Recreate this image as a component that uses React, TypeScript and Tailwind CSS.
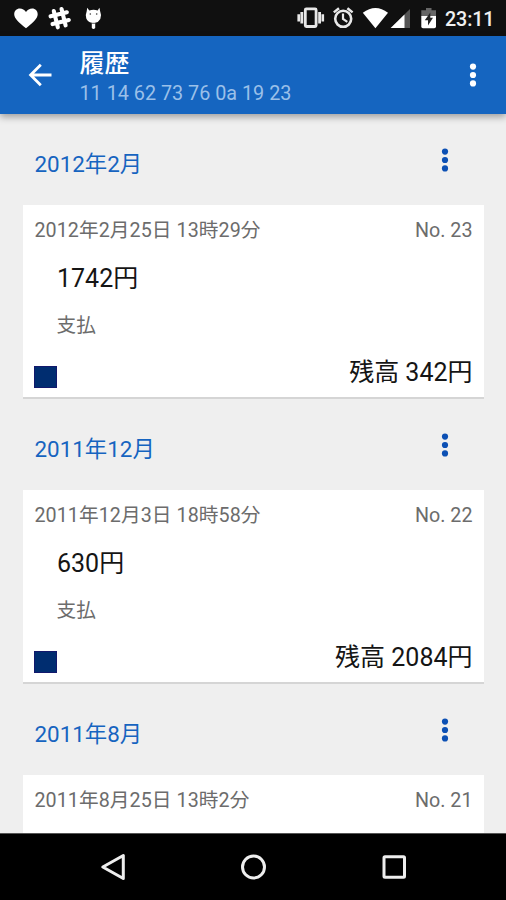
type Detail = { amount: string; kind: string; balance: string };
type Entry = { month: string; date: string; no: string; detail?: Detail };

const entries: Entry[] = [
  {
    month: '2012年2月',
    date: '2012年2月25日 13時29分',
    no: 'No. 23',
    detail: { amount: '1742円', kind: '支払', balance: '残高 342円' },
  },
  {
    month: '2011年12月',
    date: '2011年12月3日 18時58分',
    no: 'No. 22',
    detail: { amount: '630円', kind: '支払', balance: '残高 2084円' },
  },
  { month: '2011年8月', date: '2011年8月25日 13時2分', no: 'No. 21' },
];

function Dots({ className }: { className: string }) {
  return (
    <svg width="8" height="24" viewBox="0 0 8 24" className={className} fill="currentColor">
      <circle cx="4" cy="3.6" r="3.1" />
      <circle cx="4" cy="12" r="3.1" />
      <circle cx="4" cy="20.4" r="3.1" />
    </svg>
  );
}

function StatusBar() {
  return (
    <div className="flex h-9 shrink-0 items-start bg-[#101010] text-white">
      <svg width="110" height="36" viewBox="0 0 110 36" fill="#fff">
        <path d="M26 28.3C19 22.4 14.2 18.5 14.2 14.2C14.2 10.9 16.7 8.6 19.8 8.6C22.3 8.6 24.6 9.8 26 12C27.4 9.8 29.7 8.6 32.2 8.6C35.3 8.6 37.7 10.9 37.7 14.2C37.7 18.5 33 22.4 26 28.3Z" />
        <g stroke="#fff" strokeWidth="4.1" strokeLinecap="round" transform="rotate(-14 59.7 18.2)">
          <path d="M55.7 9.8V26.6M63.7 9.8V26.6M51.3 14.2H68.1M51.3 22.2H68.1" />
        </g>
        <path d="M87.2 7.8L89.3 10.5Q93.5 9.2 97.7 10.5L99.4 7.8L100.2 11.5Q101.9 15.2 100.3 19Q98.5 22.3 95.2 22.8V28Q93.5 30 91.8 28V22.8Q87.6 22 86.3 18.5Q85.2 14.5 86.7 11.2Z" />
        <circle cx="90.3" cy="14" r=".8" fill="#333" />
        <circle cx="96.7" cy="14" r=".8" fill="#333" />
        <path d="M91.3 23.3H95.7" stroke="#333" strokeWidth=".8" />
      </svg>
      <svg width="150" height="36" viewBox="0 0 150 36" fill="none" className="ml-[182px]">
        <g stroke="#e8e8e8">
          <rect x="13.3" y="8.9" width="10.8" height="17.6" rx="1" strokeWidth="2.8" />
          <path d="M9.8 12V23.5M27.6 12V23.5" strokeWidth="2.8" />
          <path d="M6.7 14.3V21.5M30.8 14.3V21.5" strokeWidth="2.6" />
          <circle cx="51.2" cy="18.8" r="8" strokeWidth="2.6" />
          <path d="M41.8 12.4L47 8.2M60.6 12.4L55.4 8.2" strokeWidth="2.5" />
          <path d="M51 13.5V19L55.3 21.9" strokeWidth="2.2" />
        </g>
        <path d="M70.8 12.8Q83.5 3.4 96 12.8L83.4 28.2Z" fill="#fff" />
        <path d="M118 9V28H98.7Z" fill="#555" />
        <path d="M112.5 14.5V28H98.7Z" fill="#fff" />
        <path d="M129.3 10.3H134V8H139.5V10.3H144V16.5H129.3Z" fill="#666" />
        <path d="M129.3 16H144V26.5Q144 28.2 142.2 28.2H131Q129.3 28.2 129.3 26.5Z" fill="#fff" />
        <path d="M138.3 12.5L132.8 20.2H136V25.5L141 17.7H138.3Z" fill="#222" />
      </svg>
      <span className="ml-[3px] mt-[7.5px] font-[Roboto] text-[19.7px] leading-[24px] font-medium tracking-[-0.1px] text-[#f0f0f0]">
        23:11
      </span>
    </div>
  );
}

function Section({ entry }: { entry: Entry }) {
  const { detail } = entry;
  return (
    <section className="h-[285px] shrink-0">
      <div className="flex h-[91px] items-start justify-between pl-[34.5px] pr-[57px] pt-[33px] text-[#1664c0]">
        <h2 className="pt-[2px] text-[22.4px] leading-[30px]">{entry.month}</h2>
        <Dots className="mt-[0.5px] text-[#0c50b4]" />
      </div>
      <article className="ml-[23px] flex h-[194px] w-[461px] flex-col border-b-2 border-[#d5d5d5] bg-white pl-[11px] pr-[11.5px] pt-[13px] text-[#6c6c6c]">
        <div className="flex justify-between text-[19.7px] leading-[26px]">
          <span className="ml-[0.5px] tracking-[0.06px]">{entry.date}</span>
          <span>{entry.no}</span>
        </div>
        {detail && (
          <>
            <p className="ml-[23px] mt-[18px] text-[25px] leading-[34px] text-[#151515]">{detail.amount}</p>
            <p className="ml-[22.5px] mt-[17px] text-[19.7px] leading-[26px]">{detail.kind}</p>
            <div className="mt-[17px] flex items-start justify-between">
              <span className="mt-[10px] h-[22px] w-[23px] border border-[#12186c] bg-[#002d70]" />
              <span className="text-[25px] leading-[34px] text-[#151515]">{detail.balance}</span>
            </div>
          </>
        )}
      </article>
    </section>
  );
}

export default function App() {
  return (
    <div className="flex h-[900px] w-[506px] flex-col overflow-hidden bg-[#efefef] font-[Roboto,'Noto_Sans_CJK_JP',sans-serif]">
      <StatusBar />
      <header className="z-10 flex h-[78px] shrink-0 items-start bg-[#1565c0] text-white shadow-[0_3px_7px_rgba(0,0,0,0.34)]">
        <svg width="24" height="24" viewBox="0 0 24 24" className="ml-[28px] mt-[27px]" fill="none" stroke="#fff" strokeWidth="2.8">
          <path d="M23.5 12H3M12.8 1.8L2.6 12L12.8 22.2" />
        </svg>
        <div className="ml-[27.5px] pt-[11px]">
          <h1 className="text-[25px] leading-[34px] font-medium">履歴</h1>
          <p className="text-[19.8px] leading-[26px] text-[#9bc0e9]">11 14 62 73 76 0a 19 23</p>
        </div>
        <Dots className="ml-auto mr-[29px] mt-[27px]" />
      </header>
      <main className="flex h-[719px] shrink-0 flex-col overflow-hidden">
        {entries.map((e) => (
          <Section key={e.no} entry={e} />
        ))}
      </main>
      <nav className="flex h-[67px] shrink-0 items-center justify-center border-t border-[#555] bg-black">
        <svg width="506" height="66" viewBox="0 0 506 66" fill="none" stroke="#eee" strokeWidth="3">
          <path d="M123.3 21.5V44.5L102.8 33Z" strokeLinejoin="round" />
          <circle cx="253.5" cy="33" r="11" />
          <rect x="384" y="22.8" width="20.5" height="20.5" rx="1" />
        </svg>
      </nav>
    </div>
  );
}
